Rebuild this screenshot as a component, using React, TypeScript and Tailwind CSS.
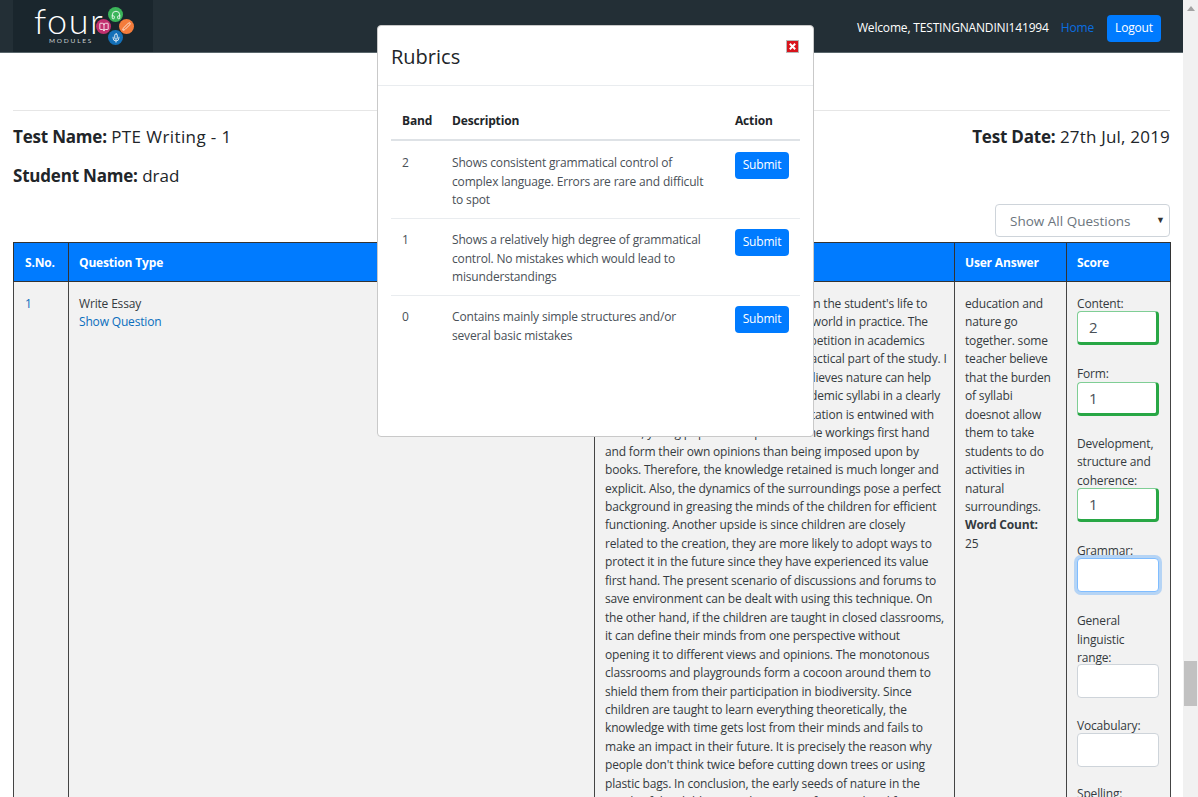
import React from 'react'
import { Headphones, BookOpen, Pen, Mic } from 'lucide-react'

const essay = [
  "Education plays a very significant role in the student's life to",
  'prepare them for the challenge of the world in practice. The',
  'increasing levels of rote learning, competition in academics',
  'has made nature study a neglected practical part of the study. I',
  'am of the opinion that anyone who believes nature can help',
  'children learn should add it to the academic syllabi in a clearly',
  'defined and planned ways. When education is entwined with',
  'nature, young pupils can experience the workings first hand',
  'and form their own opinions than being imposed upon by',
  'books. Therefore, the knowledge retained is much longer and',
  'explicit. Also, the dynamics of the surroundings pose a perfect',
  'background in greasing the minds of the children for efficient',
  'functioning. Another upside is since children are closely',
  'related to the creation, they are more likely to adopt ways to',
  'protect it in the future since they have experienced its value',
  'first hand. The present scenario of discussions and forums to',
  'save environment can be dealt with using this technique. On',
  'the other hand, if the children are taught in closed classrooms,',
  'it can define their minds from one perspective without',
  'opening it to different views and opinions. The monotonous',
  'classrooms and playgrounds form a cocoon around them to',
  'shield them from their participation in biodiversity. Since',
  'children are taught to learn everything theoretically, the',
  'knowledge with time gets lost from their minds and fails to',
  'make an impact in their future. It is precisely the reason why',
  "people don't think twice before cutting down trees or using",
  'plastic bags. In conclusion, the early seeds of nature in the',
  'minds of the children go a long way in framing their life',
]

const userAnswer = [
  'education and',
  'nature go',
  'together. some',
  'teacher believe',
  'that the burden',
  'of syllabi',
  'doesnot allow',
  'them to take',
  'students to do',
  'activities in',
  'natural',
  'surroundings.',
]

const rubrics = [
  {
    band: '2',
    lines: ['Shows consistent grammatical control of', 'complex language. Errors are rare and difficult', 'to spot'],
  },
  {
    band: '1',
    lines: ['Shows a relatively high degree of grammatical', 'control. No mistakes which would lead to', 'misunderstandings'],
  },
  {
    band: '0',
    lines: ['Contains mainly simple structures and/or', 'several basic mistakes'],
  },
]

function Logo() {
  return (
    <div className="relative w-[140px] h-[52px] bg-[#1a262d] shrink-0">
      <div className="absolute left-[21px] top-[1px] text-[36px] leading-[38px] font-light tracking-[1.5px] text-white font-['Lato',sans-serif]">four</div>
      <div className="absolute left-[36px] top-[36px] text-[6.5px] leading-[9px] tracking-[1.8px] text-[#c9cfd2] font-['Lato',sans-serif]">MODULES</div>
      <div className="absolute left-[95px] top-[7px] w-[15px] h-[15px] rounded-full bg-[#3cb55a] flex items-center justify-center">
        <Headphones className="w-[10px] h-[10px] text-white" />
      </div>
      <div className="absolute left-[83px] top-[19px] w-[15px] h-[15px] rounded-full bg-[#c2306f] flex items-center justify-center">
        <BookOpen className="w-[10px] h-[10px] text-white" />
      </div>
      <div className="absolute left-[106px] top-[19px] w-[15px] h-[15px] rounded-full bg-[#f47c3c] flex items-center justify-center">
        <Pen className="w-[9px] h-[9px] text-white" />
      </div>
      <div className="absolute left-[95px] top-[30px] w-[15px] h-[15px] rounded-full bg-[#1470b8] flex items-center justify-center">
        <Mic className="w-[10px] h-[10px] text-white" />
      </div>
    </div>
  )
}

function ScoreField({ labels, value, state, mt, tight }: { labels: string[]; value?: string; state?: 'ok' | 'focus'; mt: string; tight?: boolean }) {
  let cls = 'border border-[#ced4da]'
  if (state === 'ok') cls = 'border border-[#7fce95] border-r-[3px] border-b-[3px] border-r-[#28a745] border-b-[#28a745]'
  if (state === 'focus') cls = 'border border-[#80bdff] shadow-[0_0_0_3px_rgba(0,123,255,0.25)]'
  return (
    <div className={mt}>
      {labels.map(l => (
        <div key={l} className="h-[18.4px] leading-[18.4px] whitespace-nowrap">{l}</div>
      ))}
      <input
        readOnly
        defaultValue={value || ''}
        className={`block ${tight ? 'mt-[-4px]' : 'mt-[-2px]'} w-[82px] h-[34px] bg-white rounded-[4px] pl-[11px] text-[15px] text-[#495057] outline-none ${cls}`}
      />
    </div>
  )
}

function RubricsModal() {
  return (
    <div className="absolute left-[377px] top-[25px] w-[437px] h-[412px] bg-white border border-[#c9c9c9] rounded-[4px] text-[#212529]">
      <div className="relative h-[60px] border-b border-[#e9ecef] pl-[13px] pt-[16px] text-[20px] leading-[30px]">
        Rubrics
        <div className="absolute right-[14px] top-[14px] w-[13px] h-[13px] bg-[#d8141c] border border-[#b9b9b9] flex items-center justify-center">
          <svg viewBox="0 0 10 10" className="w-[9px] h-[9px]">
            <path d="M2 2l6 6M8 2l-6 6" stroke="#fff" strokeWidth="2.2" />
          </svg>
        </div>
      </div>
      <div className="px-[13px] pt-[25px]">
        <div className="flex h-[30px] pt-[1px] border-b-2 border-[#dee2e6] font-bold text-[12px] tracking-[-0.17px] leading-[18px]">
          <div className="w-[61px] pl-[11px]">Band</div>
          <div className="w-[283px]">Description</div>
          <div>Action</div>
        </div>
        <div className="pt-[1px]">
          {rubrics.map((r, i) => (
            <div key={r.band} className={`flex h-[77px] pt-[10px] text-[#495057] text-[12px] tracking-[-0.17px] leading-[18.5px] ${i < 2 ? 'border-b border-[#e9ecef]' : ''}`}>
              <div className="w-[61px] pl-[11px] mt-[2px]">{r.band}</div>
              <div className="w-[283px] mt-[2px]">
                {r.lines.map(l => (
                  <div key={l} className="whitespace-nowrap">{l}</div>
                ))}
              </div>
              <button type="button" className="w-[54px] h-[27px] bg-[#007bff] text-white rounded-[4px]">Submit</button>
            </div>
          ))}
        </div>
      </div>
    </div>
  )
}

export default function App() {
  return (
    <div className="flex h-[797px] overflow-hidden bg-white font-['Open_Sans',sans-serif] text-[#212529]">
      <div className="relative flex-1 min-w-0 overflow-hidden">
        <div className="h-[53px] bg-[#232f36] border-b border-[#59666b] pl-[13px] pr-[22px] flex items-center">
          <Logo />
          <div className="ml-auto pt-[4px] flex items-center text-[12px] tracking-[-0.17px]">
            <span className="text-white">Welcome, TESTINGNANDINI141994</span>
            <span className="ml-[12px] text-[#0a6ee0]">Home</span>
            <button type="button" className="ml-[13px] w-[54px] h-[27px] bg-[#007bff] text-white rounded-[4px]">Logout</button>
          </div>
        </div>

        <div className="px-[13px]">
          <div className="mt-[57px] border-t border-[#e6e6e6] pt-[14px] flex justify-between text-[17px] leading-[24px] text-[#212529]">
            <div><b className="tracking-[-0.2px]">Test Name:</b> <span className="tracking-[0.4px]">PTE Writing - 1</span></div>
            <div><b className="tracking-[-0.2px]">Test Date:</b> <span className="tracking-[0.2px]">27th Jul, 2019</span></div>
          </div>
          <div className="mt-[15px] text-[17px] leading-[24px]"><b className="tracking-[-0.2px]">Student Name:</b> drad</div>

          <div className="mt-[16px] flex justify-end">
            <div className="relative w-[175px] h-[33px] border border-[#ced4da] rounded-[4px] pl-[14px] text-[13.5px] leading-[33px] text-[#6c757d]">
              Show All Questions
              <span className="absolute right-[4px] top-[0px] text-[9px] leading-[30px] text-[#333]">▼</span>
            </div>
          </div>

          <table className="mt-[5px] w-[1157px] table-fixed border-collapse text-[12px] tracking-[-0.17px] leading-[18.45px]">
            <thead>
              <tr className="h-[39px] bg-[#007bff] text-white font-bold text-left">
                <th className="w-[55px] border border-[#333] pl-[11px] pt-[2px]">S.No.</th>
                <th className="w-[526px] border border-[#333] pl-[10px] pt-[2px]">Question Type</th>
                <th className="w-[360px] border border-[#333] pl-[10px] pt-[2px]">Sample Answer</th>
                <th className="w-[112px] border border-[#333] pl-[10px] pt-[2px]">User Answer</th>
                <th className="w-[104px] border border-[#333] pl-[10px] pt-[2px]">Score</th>
              </tr>
            </thead>
            <tbody>
              <tr className="bg-[#f2f2f2] align-top text-[#343a40]">
                <td className="border border-[#444] pl-[11px] pt-[13px] text-[#0a6ebd]">1</td>
                <td className="border border-[#444] pl-[10px] pt-[13px]">
                  <div>Write Essay</div>
                  <div className="text-[#0a6ebd]">Show Question</div>
                </td>
                <td className="border border-[#444] pl-[10px] pt-[13px]">
                  {essay.map(l => (
                    <div key={l} className="whitespace-nowrap">{l}</div>
                  ))}
                </td>
                <td className="border border-[#444] pl-[10px] pt-[13px]">
                  {userAnswer.map(l => (
                    <div key={l} className="whitespace-nowrap">{l}</div>
                  ))}
                  <div className="font-bold">Word Count:</div>
                  <div>25</div>
                </td>
                <td className="border border-[#444] pl-[10px] pt-[13px]">
                  <ScoreField mt="" labels={['Content:']} value="2" state="ok" />
                  <ScoreField mt="mt-[20px]" labels={['Form:']} value="1" state="ok" />
                  <ScoreField mt="mt-[19px]" labels={['Development,', 'structure and', 'coherence:']} value="1" state="ok" />
                  <ScoreField mt="mt-[20px]" labels={['Grammar:']} state="focus" />
                  <ScoreField mt="mt-[20px]" tight labels={['General', 'linguistic', 'range:']} />
                  <ScoreField mt="mt-[19px]" labels={['Vocabulary:']} />
                  <div className="mt-[18px]">Spelling:</div>
                </td>
              </tr>
            </tbody>
          </table>
        </div>

        <RubricsModal />
      </div>

      <div className="w-[15px] shrink-0 bg-[#f1f1f1] flex flex-col items-center">
        <div className="mt-[6px] w-0 h-0 border-l-[4px] border-r-[4px] border-b-[5px] border-l-transparent border-r-transparent border-b-[#a3a3a3]" />
        <div className="mt-[650px] w-[13px] h-[45px] bg-[#c1c1c1]" />
      </div>
    </div>
  )
}
